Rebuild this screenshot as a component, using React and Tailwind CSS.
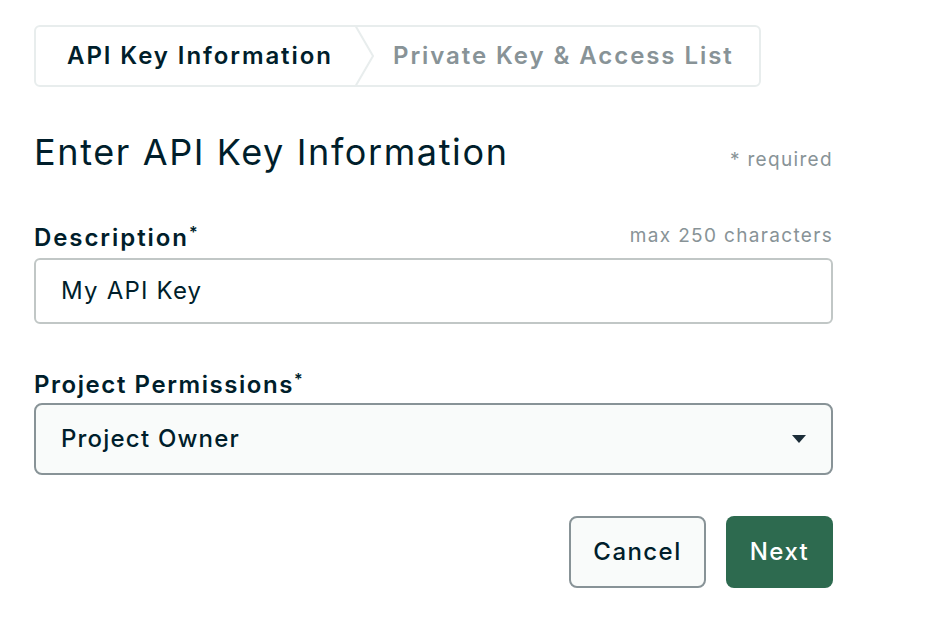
export default function App() {
  return (
    <div className="min-h-screen bg-white pl-[34px] pt-[25px] text-[#001e2b]" style={{ fontFamily: 'Inter, "Liberation Sans", sans-serif' }}>
      <div className="w-[799px]">
        {/* stepper */}
        <div className="flex h-[62px] w-[727px] items-stretch rounded-[6px] border-2 border-[#e8eded]">
          <div className="flex w-[318px] items-center pl-[31px] text-[24px] font-semibold tracking-[0.08em] text-[#001e2b]">
            API Key Information
          </div>
          <svg width="22" height="62" viewBox="0 0 22 62" className="-my-[2px] h-[62px] shrink-0">
            <path d="M1 0 L19 31 L1 62" fill="none" stroke="#e8eded" strokeWidth="2" />
          </svg>
          <div className="flex items-center pl-[17px] text-[24px] font-semibold tracking-[0.08em] text-[#889397]">
            Private Key &amp; Access List
          </div>
        </div>

        {/* heading */}
        <div className="mt-[41px] flex items-end justify-between">
          <h1 className="text-[36px] font-normal leading-[48px] tracking-[0.045em]">Enter API Key Information</h1>
          <span className="mb-[2px] text-[19px] tracking-[0.07em] text-[#889397]">* required</span>
        </div>

        {/* description */}
        <div className="mt-[46px] flex items-end justify-between">
          <label className="text-[24px] font-semibold leading-[30px] tracking-[0.08em]">
            Description<sup className="text-[16px]">*</sup>
          </label>
          <span className="mb-[2px] text-[19px] tracking-[0.07em] text-[#889397]">max 250 characters</span>
        </div>
        <input
          type="text"
          defaultValue="My API Key"
          className="mt-[5px] h-[66px] w-full rounded-[6px] border-2 border-[#c1c7c6] bg-white px-[25px] text-[24px] tracking-[0.05em] text-[#001e2b] outline-none"
        />

        {/* permissions */}
        <label className="mt-[46px] block text-[24px] font-semibold leading-[30px] tracking-[0.065em]">
          Project Permissions<sup className="text-[16px]">*</sup>
        </label>
        <div className="mt-[3px] flex h-[72px] items-center justify-between rounded-[8px] border-2 border-[#889397] bg-[#f9fbfa] pl-[25px] pr-[24px]">
          <span className="text-[24px] font-medium tracking-[0.05em]">Project Owner</span>
          <svg width="16" height="10" viewBox="0 0 16 10">
            <path d="M1 1 H15 L8 9 Z" fill="#1c2d38" />
          </svg>
        </div>

        {/* actions */}
        <div className="mt-[41px] flex justify-end gap-[20px]">
          <button className="h-[72px] w-[137px] rounded-[8px] border-2 border-[#889397] bg-[#f9fbfa] text-[24px] font-medium tracking-[0.06em] text-[#001e2b]">
            Cancel
          </button>
          <button className="h-[72px] w-[107px] rounded-[8px] bg-[#2d6a4f] text-[24px] font-medium tracking-[0.06em] text-white">
            Next
          </button>
        </div>
      </div>
    </div>
  );
}
